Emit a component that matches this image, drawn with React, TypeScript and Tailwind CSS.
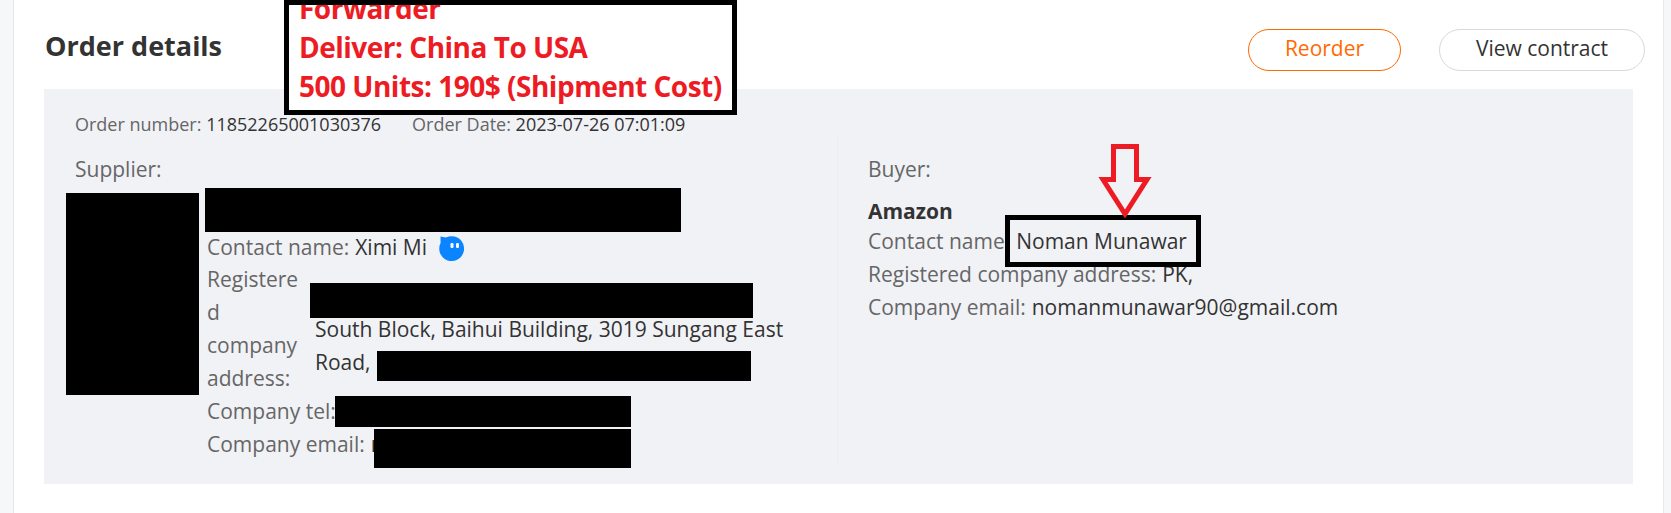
import React from 'react';

// redaction bars drawn on top of the screenshot, positions come from the picture
function Redact({ className }: { className: string }) {
  return <div className={`absolute bg-black ${className}`} />;
}

function MsgIcon() {
  return (
    <svg width="26" height="26" viewBox="0 0 26 26" className="ml-3 shrink-0">
      <path d="M1.5 1.5 L7 2.6 A12.4 12.4 0 1 1 1.6 8 Z" fill="#0a84ff" />
      <rect x="11.5" y="8" width="3" height="5" rx="1.3" fill="#fff" />
      <rect x="17" y="8" width="3" height="5" rx="1.3" fill="#fff" />
    </svg>
  );
}

function Line({ label, children }: { label: string; children?: React.ReactNode }) {
  return (
    <div className="flex items-center h-[33px] whitespace-nowrap">
      <span className="text-[#666]">{label}</span>
      {children && <span className="ml-[6px] text-[#333]">{children}</span>}
    </div>
  );
}

export default function App() {
  return (
    <div className="relative h-[513px] w-[1671px] overflow-hidden bg-[#f6f7f9] font-['Open_Sans',sans-serif] text-[21px]">
      {/* card */}
      <div className="ml-[13px] mr-[7px] h-full border-x border-[#e6e8ec] bg-white">
        <div className="flex items-center justify-between pl-[31px] pr-[18px] pt-[29px] h-[89px] pb-[18px]">
          <h2 className="text-[27px] leading-[32px] font-bold text-[#333] -mt-[8px]">Order details</h2>
          <div className="flex gap-[38px]">
            <button className="h-[42px] w-[153px] rounded-full border border-[#ff6a00] text-[#ff6a00] text-[21px] pb-[2px]">
              Reorder
            </button>
            <button className="h-[42px] w-[206px] rounded-full border border-[#d9d9d9] text-[#333] text-[21px] pb-[2px]">
              View contract
            </button>
          </div>
        </div>

        <div className="ml-[30px] w-[1589px] h-[395px] bg-[#f1f2f6] pt-[24px]">
          <div className="flex pl-[31px] text-[18px] leading-[22px] text-[#666]">
            <span>
              Order number: <span className="text-[#333]">11852265001030376</span>
            </span>
            <span className="ml-[31px]">
              Order Date: <span className="text-[#333]">2023-07-26 07:01:09</span>
            </span>
          </div>

          <div className="flex">
            {/* supplier */}
            <div className="w-[794px] pl-[31px] pt-[19px] h-[329px] border-r border-[#eceef2]">
              <div className="text-[#666] leading-[30px]">Supplier:</div>
              <div className="pl-[132px] pt-[47px]">
                <div className="flex items-center h-[33px] -mb-[1px] whitespace-nowrap text-[#333]">
                  <span className="text-[#666]">Contact name:</span>
                  <span className="ml-[6px]">Ximi Mi</span>
                  <MsgIcon />
                </div>
                <div className="flex leading-[33px]">
                  <div className="w-[108px] pr-[12px] break-words text-[#666]">Registered company address:</div>
                  <div className="w-[470px] pt-[50px] text-[#333]">
                    South Block, Baihui Building, 3019 Sungang East Road,
                  </div>
                </div>
                <Line label="Company tel:" />
                <Line label="Company email:">n</Line>
              </div>
            </div>

            {/* buyer */}
            <div className="pl-[30px] pt-[19px]">
              <div className="text-[#666] leading-[30px]">Buyer:</div>
              <div className="mt-[13px] font-bold text-[#333] leading-[28px]">Amazon</div>
              <div className="">
                <Line label="Contact name:">Noman Munawar</Line>
                <Line label="Registered company address:">PK,</Line>
                <Line label="Company email:">nomanmunawar90@gmail.com</Line>
              </div>
            </div>
          </div>
        </div>
      </div>

      {/* annotation: forwarder note */}
      <div className="absolute left-[284px] top-0 h-[115px] w-[453px] overflow-hidden border-[5px] border-black bg-white pl-[10px] text-[28px] font-bold leading-[39px] text-[#ed1c24] whitespace-nowrap tracking-[-0.5px]">
        <div className="-mt-[16px]">Forwarder</div>
        <div>Deliver: China To USA</div>
        <div>500 Units: 190$ (Shipment Cost)</div>
      </div>

      {/* annotation: name highlight */}
      <div className="absolute left-[1005px] top-[215px] h-[52px] w-[196px] border-[5px] border-black" />
      <svg className="absolute left-[1095px] top-[140px]" width="60" height="78" viewBox="0 0 60 78">
        <path d="M18.5 6.5 H41.5 V39.5 H52 L30 74 L8 39.5 H18.5 Z" fill="none" stroke="#ed1c24" strokeWidth="5" />
      </svg>

      {/* redactions */}
      <Redact className="left-[66px] top-[193px] h-[202px] w-[133px]" />
      <Redact className="left-[205px] top-[188px] h-[44px] w-[476px]" />
      <Redact className="left-[310px] top-[283px] h-[35px] w-[443px]" />
      <Redact className="left-[377px] top-[351px] h-[30px] w-[374px]" />
      <Redact className="left-[335px] top-[396px] h-[31px] w-[296px]" />
      <Redact className="left-[374px] top-[429px] h-[39px] w-[257px]" />
    </div>
  );
}
